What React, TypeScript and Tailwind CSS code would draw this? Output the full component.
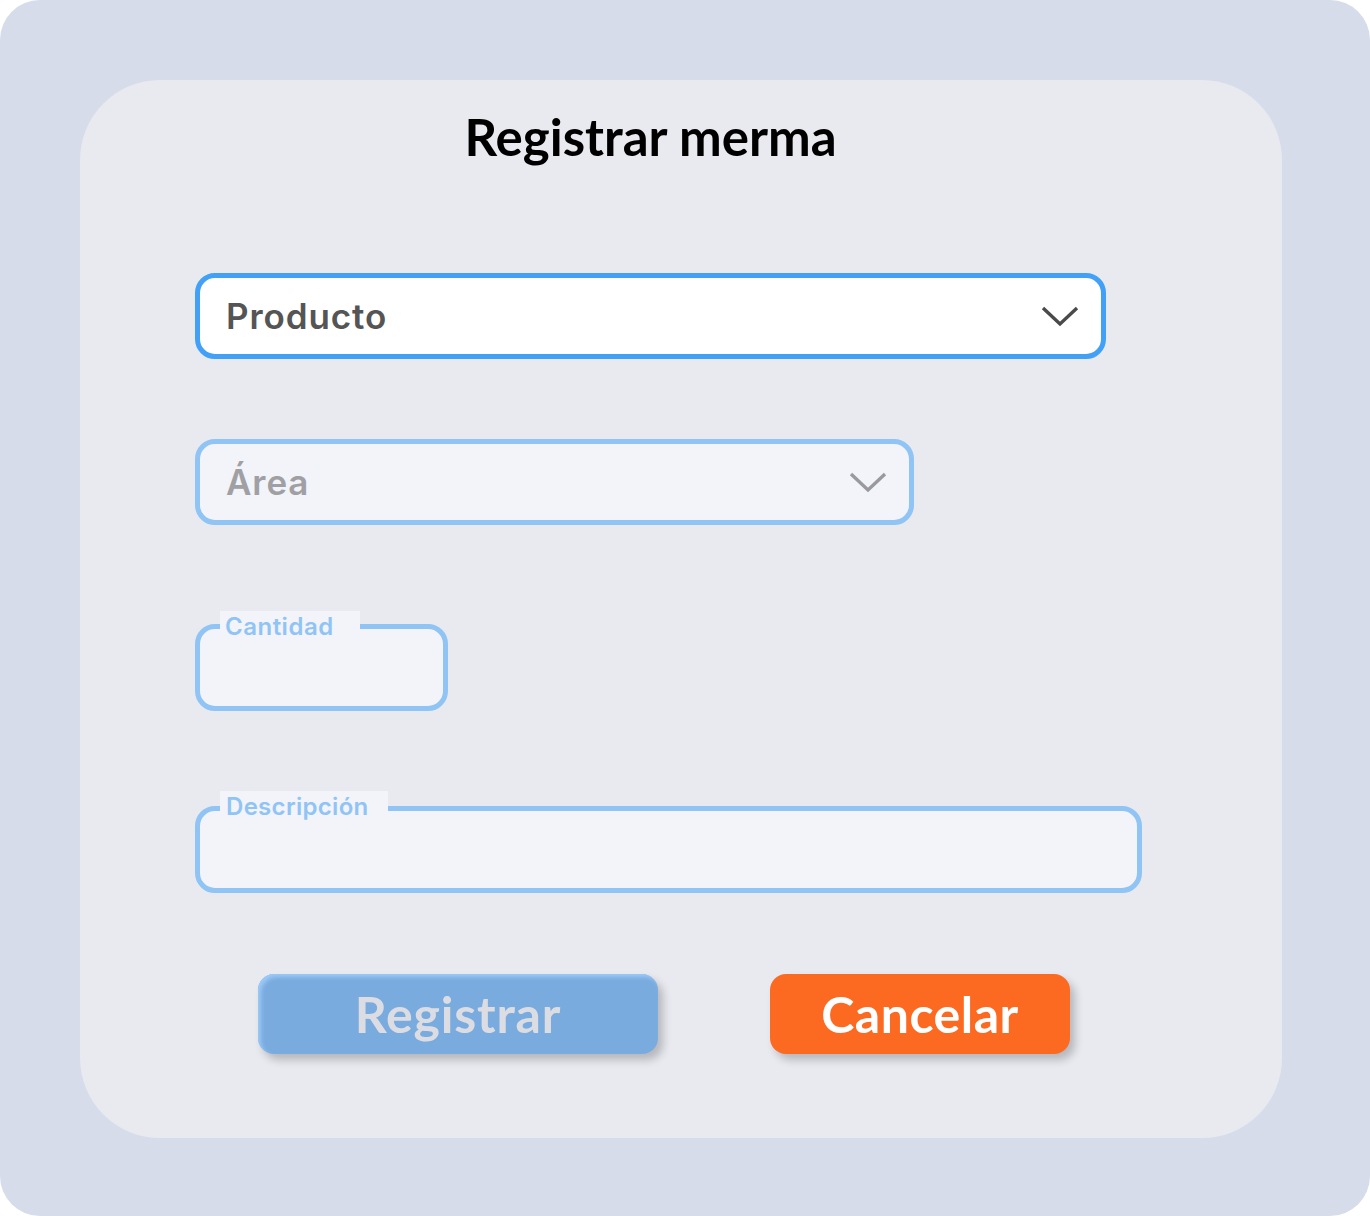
import React from "react";

const Chevron = ({ color }: { color: string }) => (
  <svg width="38" height="22" viewBox="0 0 38 22" fill="none">
    <polyline points="2,3 19,19 36,3" stroke={color} strokeWidth="3.4" />
  </svg>
);

export default function App() {
  return (
    <div className="w-[1370px] h-[1216px] bg-white">
      <div className="h-full rounded-[40px] bg-[#d7dceb] pl-[80px] pr-[88px] pt-[80px]">
        <div
          className="h-[1058px] rounded-[80px] bg-[#e9eaf0] pl-[115px] pt-[25px] flex flex-col"
          style={{ fontFamily: "Inter, 'Noto Sans', sans-serif" }}
        >
          {/* Title */}
          <h1
            className="w-[911px] text-center text-[51px] font-bold text-black leading-[64px]"
            style={{ fontFamily: "Lato, 'Open Sans', sans-serif" }}
          >
            Registrar merma
          </h1>

          {/* Producto */}
          <div className="mt-[104px] w-[911px] h-[86px] rounded-[20px] border-[5px] border-[#42a0f7] bg-white flex items-center justify-between pl-[26px] pr-[22px]">
            <span className="text-[35px] font-semibold text-[#555555] tracking-[0.9px]">
              Producto
            </span>
            <Chevron color="#4a4a4a" />
          </div>

          {/* Área */}
          <div className="mt-[80px] w-[719px] h-[86px] rounded-[20px] border-[5px] border-[#90c4f5] bg-[#f3f4f9] flex items-center justify-between pl-[26px] pr-[22px]">
            <span className="text-[35px] font-semibold text-[#a0a0a4] tracking-[0.9px]">
              Área
            </span>
            <Chevron color="#9a9a9e" />
          </div>

          {/* Cantidad */}
          <div className="relative mt-[99px] w-[253px] h-[87px] rounded-[20px] border-[5px] border-[#90c4f5] bg-[#f3f4f9]">
            <span className="absolute left-[20px] top-[-18px] w-[140px] h-[30px] bg-[#f3f4f9] pl-[5px] text-[24px] leading-[31px] font-semibold text-[#90c4f5] tracking-[0.5px]">
              Cantidad
            </span>
          </div>

          {/* Descripción */}
          <div className="relative mt-[95px] w-[947px] h-[87px] rounded-[20px] border-[5px] border-[#90c4f5] bg-[#f3f4f9]">
            <span className="absolute left-[20px] top-[-20px] w-[168px] h-[30px] bg-[#f3f4f9] pl-[6px] text-[24px] leading-[31px] font-semibold text-[#90c4f5] tracking-[0.3px]">
              Descripción
            </span>
          </div>

          {/* Buttons */}
          <div
            className="mt-[81px] ml-[63px] flex gap-[112px]"
            style={{ fontFamily: "Lato, 'Open Sans', sans-serif" }}
          >
            <button className="w-[400px] h-[80px] rounded-[16px] bg-[#7aabdf] text-[50px] font-bold text-[#dcdde2] tracking-[0.8px] shadow-[inset_3px_3px_4px_rgba(160,205,250,0.9),5px_6px_8px_rgba(0,0,0,0.22)]">
              Registrar
            </button>
            <button className="w-[300px] h-[80px] rounded-[16px] bg-[#fc6a21] text-[50px] font-bold text-white tracking-[0.5px] shadow-[5px_6px_8px_rgba(0,0,0,0.22)]">
              Cancelar
            </button>
          </div>
        </div>
      </div>
    </div>
  );
}
